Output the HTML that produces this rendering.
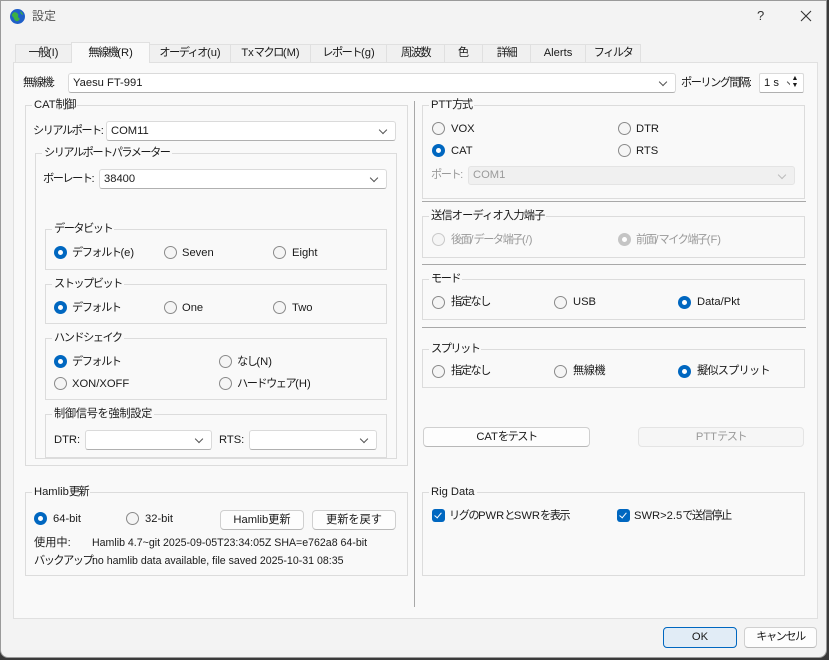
<!DOCTYPE html>
<html><head><meta charset="utf-8"><style>
*{box-sizing:border-box;margin:0;padding:0}
body{width:829px;height:660px;background:#3a3a3a;position:relative;overflow:hidden;font-family:"Liberation Sans","Noto Sans CJK JP",sans-serif;font-size:11.2px;color:#1a1a1a}
.j{letter-spacing:-1.5px}
.j b{font-weight:normal;letter-spacing:0}
.win{position:absolute;left:0;top:0;width:827px;height:658px;background:#f3f3f3;border:1px solid #9a9a9a;border-radius:0 0 8px 8px}
.a{position:absolute;white-space:nowrap;line-height:16px}
.pane{position:absolute;left:12px;top:61px;width:805px;height:557px;background:#f9f9f9;border:1px solid #e0e0e0}
.tab{position:absolute;top:43px;height:19px;border:1px solid #e0e0e0;border-bottom:none;background:#f0f0f0;text-align:center;line-height:17px}
.tab.sel{top:41px;height:21px;background:#f9f9f9;line-height:20px}
.g{position:absolute;border:1px solid #dcdcdc}
.gt{position:absolute;top:-9px;left:6px;background:#f9f9f9;padding:0 2px;line-height:16px;white-space:nowrap;letter-spacing:-1.5px}
.gt b{font-weight:normal;letter-spacing:0}
.cb{position:absolute;height:20px;background:#fff;border:1px solid #dadada;border-radius:3px;border-bottom-color:#b0b0b0;padding-left:4px;line-height:18px}
.cb:after{content:"";position:absolute;right:9px;top:5px;width:5px;height:5px;border-right:1px solid #555;border-bottom:1px solid #555;transform:rotate(45deg)}
.cb.dis{background:#f0f0f0;color:#9a9a9a;border-color:#e4e4e4}
.cb.dis:after{border-color:#bbb}
.r{position:absolute;width:13px;height:13px;border-radius:50%;border:1px solid #8a8a8a;background:#f5f5f5}
.r.on{border:none;background:#0067c0}
.r.on:after{content:"";position:absolute;left:4px;top:4px;width:5px;height:5px;border-radius:50%;background:#fff}
.r.dis{border-color:#c8c8c8}
.r.dison{border:none;background:#c5c5c5}
.r.dison:after{content:"";position:absolute;left:4px;top:4px;width:5px;height:5px;border-radius:50%;background:#fff}
.btn{position:absolute;height:20px;background:#fdfdfd;border:1px solid #d0d0d0;border-bottom-color:#b8b8b8;border-radius:4px;text-align:center;line-height:18px}
.ck{position:absolute;width:13px;height:13px;border-radius:3px;background:#0067c0}
.ck:after{content:"";position:absolute;left:4px;top:2px;width:3px;height:6px;border-right:1.3px solid #fff;border-bottom:1.3px solid #fff;transform:rotate(40deg)}
.sep{position:absolute;height:1px;background:#a8a8a8}
.dim{color:#9a9a9a}
</style></head><body>
<div class="win">
<svg class="a" style="left:8px;top:7px" width="17" height="17" viewBox="0 0 17 17"><circle cx="8.5" cy="8.5" r="7.5" fill="#1f5fc8"/><path d="M4 5c2-2 4 0 5 1s-1 3 1 4-1 4-3 3-2-3-3-4-2-2 0-4z" fill="#3cb043"/><path d="M11 3c2 1 3 3 3 4l-2-1z" fill="#3cb043"/></svg>
<div class="a" style="left:31px;top:7px;color:#555;font-size:12px">設定</div>
<div class="a" style="left:756px;top:7px;color:#333;font-size:13px">?</div>
<svg class="a" style="left:799px;top:9px" width="12" height="12"><path d="M1 1L11 11M11 1L1 11" stroke="#333" stroke-width="1.1"/></svg>

<div class="tab j" style="left:14px;width:57px">一般<b>(I)</b></div>
<div class="tab j" style="left:148px;width:82px">オーディオ<b>(u)</b></div>
<div class="tab j" style="left:229px;width:81px"><b>Tx</b>マクロ<b>(M)</b></div>
<div class="tab j" style="left:309px;width:77px">レポート<b>(g)</b></div>
<div class="tab j" style="left:385px;width:59px">周波数</div>
<div class="tab" style="left:443px;width:39px">色</div>
<div class="tab j" style="left:481px;width:49px">詳細</div>
<div class="tab" style="left:529px;width:56px">Alerts</div>
<div class="tab j" style="left:584px;width:56px">フィルタ</div>
<div class="pane"></div>
<div class="tab sel j" style="left:70px;width:79px">無線機<b>(R)</b></div>

<div class="a j" style="left:22px;top:74px">無線機<b>:</b></div>
<div class="cb" style="left:67px;top:72px;width:608px">Yaesu FT-991</div>
<div class="a j" style="left:680px;top:74px">ポーリング間隔<b>:</b></div>
<div class="cb" style="left:758px;top:72px;width:45px;border-radius:2px">1 s</div>
<div class="a" style="left:789px;top:74px;width:10px;height:14px;background:#fff;font-size:7px;line-height:7px;text-align:center">▲<br>▼</div>

<div class="g" style="left:24px;top:104px;width:383px;height:361px"><span class="gt"><b>CAT</b>制御</span></div>
<div class="a j" style="left:32px;top:122px">シリアルポート<b>:</b></div>
<div class="cb" style="left:105px;top:120px;width:290px">COM11</div>
<div class="g" style="left:34px;top:152px;width:362px;height:306px"><span class="gt">シリアルポートパラメーター</span></div>
<div class="a j" style="left:42px;top:170px">ボーレート<b>:</b></div>
<div class="cb" style="left:98px;top:168px;width:288px">38400</div>

<div class="g" style="left:44px;top:228px;width:342px;height:41px"><span class="gt">データビット</span></div>
<div class="r on" style="left:53px;top:245px"></div><div class="a j" style="left:71px;top:244px">デフォルト<b>(e)</b></div>
<div class="r" style="left:163px;top:245px"></div><div class="a" style="left:181px;top:244px">Seven</div>
<div class="r" style="left:272px;top:245px"></div><div class="a" style="left:291px;top:244px">Eight</div>

<div class="g" style="left:44px;top:283px;width:342px;height:40px"><span class="gt">ストップビット</span></div>
<div class="r on" style="left:53px;top:300px"></div><div class="a j" style="left:71px;top:299px">デフォルト</div>
<div class="r" style="left:163px;top:300px"></div><div class="a" style="left:181px;top:299px">One</div>
<div class="r" style="left:272px;top:300px"></div><div class="a" style="left:291px;top:299px">Two</div>

<div class="g" style="left:44px;top:337px;width:342px;height:62px"><span class="gt">ハンドシェイク</span></div>
<div class="r on" style="left:53px;top:354px"></div><div class="a j" style="left:71px;top:353px">デフォルト</div>
<div class="r" style="left:218px;top:354px"></div><div class="a j" style="left:236px;top:353px">なし<b>(N)</b></div>
<div class="r" style="left:53px;top:376px"></div><div class="a" style="left:71px;top:375px">XON/XOFF</div>
<div class="r" style="left:218px;top:376px"></div><div class="a j" style="left:236px;top:375px">ハードウェア<b>(H)</b></div>

<div class="g" style="left:44px;top:413px;width:342px;height:44px"><span class="gt" style="letter-spacing:-0.3px">制御信号を強制設定</span></div>
<div class="a" style="left:53px;top:431px">DTR:</div>
<div class="cb" style="left:84px;top:429px;width:127px"></div>
<div class="a" style="left:218px;top:431px">RTS:</div>
<div class="cb" style="left:248px;top:429px;width:128px"></div>

<div class="g" style="left:24px;top:491px;width:383px;height:84px"><span class="gt"><b>Hamlib</b>更新</span></div>
<div class="r on" style="left:33px;top:511px"></div><div class="a" style="left:52px;top:510px">64-bit</div>
<div class="r" style="left:125px;top:511px"></div><div class="a" style="left:144px;top:510px">32-bit</div>
<div class="btn" style="left:219px;top:509px;width:84px">Hamlib更新</div>
<div class="btn" style="left:311px;top:509px;width:84px">更新を戻す</div>
<div class="a" style="left:33px;top:534px">使用中:</div>
<div class="a" style="left:91px;top:534px;font-size:10.6px">Hamlib 4.7~git 2025-09-05T23:34:05Z SHA=e762a8 64-bit</div>
<div class="a j" style="left:33px;top:552px">バックアップ<b>: </b></div>
<div class="a" style="left:91px;top:552px;font-size:10.6px">no hamlib data available, file saved 2025-10-31 08:35</div>

<div class="a" style="left:413px;top:100px;width:1px;height:506px;background:#a8a8a8"></div>

<div class="g" style="left:421px;top:104px;width:383px;height:94px"><span class="gt"><b>PTT</b>方式</span></div>
<div class="r" style="left:431px;top:121px"></div><div class="a" style="left:450px;top:120px">VOX</div>
<div class="r" style="left:617px;top:121px"></div><div class="a" style="left:635px;top:120px">DTR</div>
<div class="r on" style="left:431px;top:143px"></div><div class="a" style="left:450px;top:142px">CAT</div>
<div class="r" style="left:617px;top:143px"></div><div class="a" style="left:635px;top:142px">RTS</div>
<div class="a dim j" style="left:430px;top:166px">ポート<b>:</b></div>
<div class="cb dis" style="left:467px;top:165px;width:327px;height:19px;line-height:17px">COM1</div>
<div class="sep" style="left:421px;top:200px;width:384px"></div>

<div class="g" style="left:421px;top:215px;width:383px;height:42px"><span class="gt" style="letter-spacing:-0.8px">送信オーディオ入力端子</span></div>
<div class="r dis" style="left:431px;top:232px"></div><div class="a dim j" style="left:450px;top:231px">後面<b>/</b>データ端子<b>(/)</b></div>
<div class="r dison" style="left:617px;top:232px"></div><div class="a dim j" style="left:635px;top:231px">前面<b>/</b>マイク端子<b>(F)</b></div>
<div class="sep" style="left:421px;top:263px;width:384px"></div>

<div class="g" style="left:421px;top:278px;width:383px;height:41px"><span class="gt">モード</span></div>
<div class="r" style="left:431px;top:295px"></div><div class="a j" style="left:450px;top:293px">指定なし</div>
<div class="r" style="left:553px;top:295px"></div><div class="a" style="left:572px;top:293px">USB</div>
<div class="r on" style="left:677px;top:295px"></div><div class="a" style="left:696px;top:293px">Data/Pkt</div>
<div class="sep" style="left:421px;top:326px;width:384px"></div>

<div class="g" style="left:421px;top:348px;width:383px;height:39px"><span class="gt">スプリット</span></div>
<div class="r" style="left:431px;top:364px"></div><div class="a j" style="left:450px;top:362px">指定なし</div>
<div class="r" style="left:553px;top:364px"></div><div class="a" style="left:572px;top:362px;letter-spacing:-0.5px">無線機</div>
<div class="r on" style="left:677px;top:364px"></div><div class="a" style="left:696px;top:362px;letter-spacing:-0.8px">擬似スプリット</div>

<div class="btn" style="left:422px;top:426px;width:167px"><span class="j"><b>CAT</b>をテスト</span></div>
<div class="btn dim" style="left:637px;top:426px;width:166px;background:#f6f6f6;border-color:#e4e4e4"><span class="j"><b>PTT</b>テスト</span></div>

<div class="g" style="left:421px;top:491px;width:383px;height:84px"><span class="gt"><b>Rig Data</b></span></div>
<div class="ck" style="left:431px;top:508px"></div><div class="a j" style="left:448px;top:507px">リグの<b>PWR</b>と<b>SWR</b>を表示</div>
<div class="ck" style="left:616px;top:508px"></div><div class="a j" style="left:633px;top:507px"><b>SWR&gt;2.5</b>で送信停止</div>

<div class="btn" style="left:662px;top:626px;width:74px;height:21px;background:#e1ecf6;border-color:#0067c0;line-height:19px">OK</div>
<div class="btn" style="left:743px;top:626px;width:73px;height:21px;line-height:19px"><span class="j">キャンセル</span></div>
</div>
</body></html>
